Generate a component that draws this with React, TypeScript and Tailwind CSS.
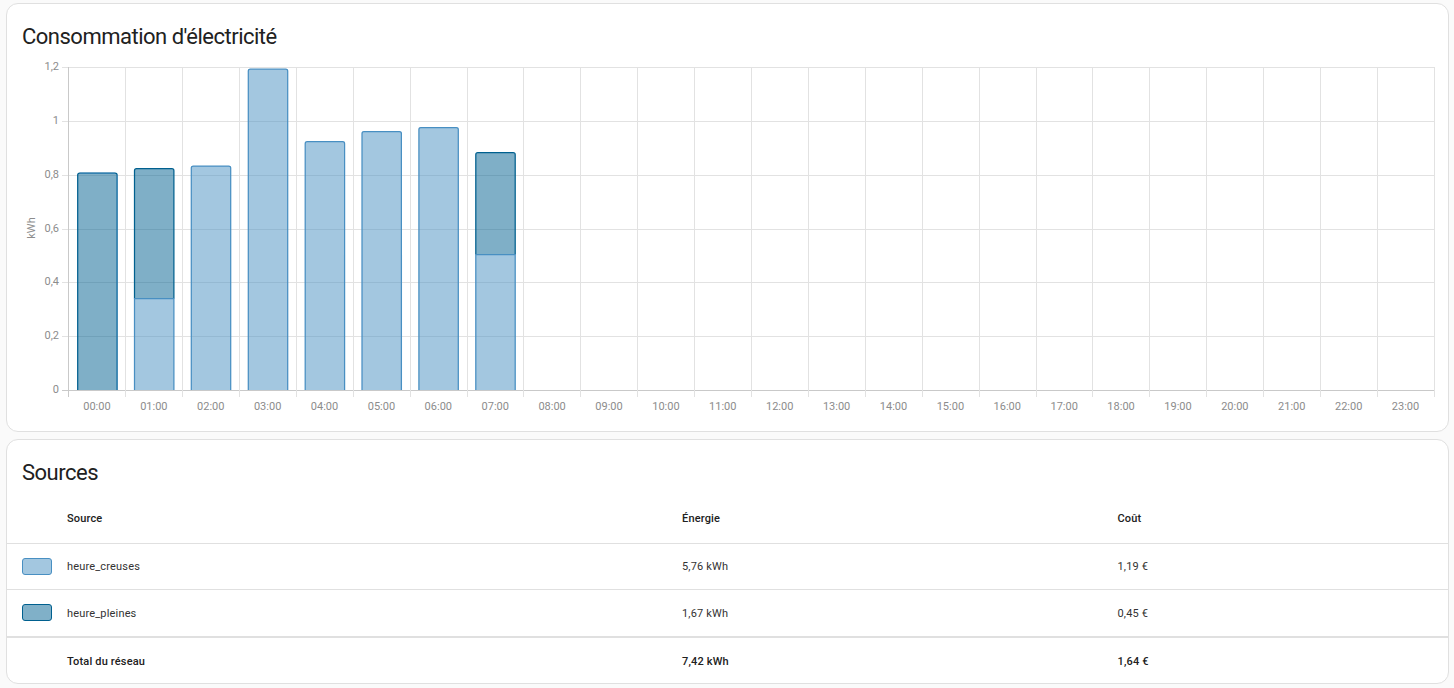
const hours = Array.from({ length: 24 }, (_, i) => String(i).padStart(2, "0") + ":00");
const yTicks = [
  { label: "1,2", y: 67.5 },
  { label: "1", y: 121.5 },
  { label: "0,8", y: 175.5 },
  { label: "0,6", y: 229.5 },
  { label: "0,4", y: 282.5 },
  { label: "0,2", y: 336.5 },
  { label: "0", y: 390.5 },
];
const step = (1434 - 68.5) / 24;
const gridX = [68, 125, 182, 239, 296, 353, 410, 467, 523, 580, 637, 694, 751, 808, 865, 922, 979, 1036, 1092, 1149, 1206, 1263, 1320, 1377, 1434];
const base = 390;

// top = top edge of the bar, split = edge between dark (above) and light (below)
const bars = [
  { x: 77.7, top: 173, split: 390, dark: true },
  { x: 134.5, top: 168.7, split: 298.5, dark: true },
  { x: 191.3, top: 166, split: 166, dark: false },
  { x: 248.3, top: 69.2, split: 69.2, dark: false },
  { x: 305.2, top: 141.7, split: 141.7, dark: false },
  { x: 362, top: 131.7, split: 131.7, dark: false },
  { x: 418.9, top: 127.5, split: 127.5, dark: false },
  { x: 475.8, top: 152.7, split: 254.5, dark: true },
];
const barW = 39.4;

function topPath(x: number, top: number, bottom: number) {
  return `M${x} ${bottom}V${top + 2}Q${x} ${top} ${x + 2} ${top}H${x + barW - 2}Q${x + barW} ${top} ${x + barW} ${top + 2}V${bottom}`;
}

function Chart() {
  return (
    <svg viewBox="7 56 1441 375" className="block w-[1441px] h-[375px]">
      {yTicks.map((t) => (
        <g key={t.label}>
          <line x1={62} x2={1434} y1={t.y} y2={t.y} stroke={t.label === "0" ? "#c9c9c9" : "#e2e2e2"} />
          <text x={59} y={t.y + 2} textAnchor="end" fontSize={11} fill="#8c8c8c" fontFamily="Roboto, sans-serif">
            {t.label}
          </text>
        </g>
      ))}
      {gridX.map((g, i) => (
        <line key={g} x1={g + 0.5} x2={g + 0.5} y1={67} y2={397} stroke={i === 0 ? "#c9c9c9" : "#e2e2e2"} />
      ))}
      {hours.map((h, i) => (
        <text key={h} x={68.5 + step * (i + 0.5)} y={410} textAnchor="middle" fontSize={11} fill="#8c8c8c" fontFamily="Roboto, sans-serif">
          {h}
        </text>
      ))}
      <text
        x={0}
        y={0}
        transform="translate(35 228) rotate(-90)"
        textAnchor="middle"
        fontSize={11}
        fill="#8c8c8c"
        fontFamily="Roboto, sans-serif"
      >
        kWh
      </text>
      {bars.map((b, i) => (
        <g key={b.x}>
          {b.dark && (
            <>
              <path d={`${topPath(b.x, b.top, b.split)}Z`} fill="#00608f" fillOpacity={0.5} />
              <path d={topPath(b.x, b.top, b.split)} fill="none" stroke="#00608f" strokeWidth={1.25} />
            </>
          )}
          {/* first bar: light series sits on top with almost no height, only its edge shows */}
          {i === 0 && (
            <path
              d={`M${b.x + 2} ${b.top}H${b.x + barW - 2}M${b.x + barW} ${b.top + 2}V${base}`}
              fill="none"
              stroke="#488fc2"
              strokeWidth={1.25}
              strokeOpacity={0.7}
            />
          )}
          {b.split < base && (
            <>
              <rect x={b.x} y={b.split} width={barW} height={base - b.split} fill="#488fc2" fillOpacity={0.5} />
              <path
                d={
                  b.dark
                    ? `M${b.x} ${base}V${b.split}H${b.x + barW}V${base}`
                    : topPath(b.x, b.split, base)
                }
                fill="none"
                stroke="#488fc2"
                strokeWidth={1.25}
              />
            </>
          )}
        </g>
      ))}
    </svg>
  );
}

function Swatch({ dark }: { dark: boolean }) {
  return (
    <div
      className={
        dark
          ? "w-[30px] h-[17px] rounded-[3px] border border-[#00608f] bg-[#80b0c8]"
          : "w-[30px] h-[17px] rounded-[3px] border border-[#488fc2] bg-[#a3c7e0]"
      }
    />
  );
}

export default function App() {
  return (
    <div
      className="h-[688px] overflow-hidden bg-[#fafafa] pt-[3px] pl-[6px] pr-[5px] flex flex-col gap-[7px] text-[#212121] opacity-[0.999]"
      style={{ fontFamily: "Roboto, sans-serif" }}
    >
      <div className="h-[429px] rounded-xl border border-[#e0e0e0] bg-white overflow-hidden">
        <h1 className="pt-[17px] pb-[3px] px-[15px] text-[22px] leading-8 tracking-[-0.5px] font-normal">Consommation d'électricité</h1>
        <Chart />
      </div>
      <div className="h-[245px] rounded-xl border border-[#e0e0e0] bg-white overflow-hidden">
        <h1 className="pt-[17px] pb-[5px] px-[15px] text-[22px] leading-8 tracking-[-0.5px] font-normal">Sources</h1>
        <table className="w-full table-fixed text-[11px] tracking-[0.015em]">
          <thead>
            <tr className="h-[49px] border-b border-[#e0e0e0] text-left">
              <th className="w-[60px]"></th>
              <th className="w-[615px] pt-[2px] font-medium">Source</th>
              <th className="w-[435.5px] pt-[2px] font-medium">Énergie</th>
              <th className="pt-[2px] font-medium">Coût</th>
            </tr>
          </thead>
          <tbody className="text-[#333333]">
            <tr className="h-[46px] border-b border-[#e0e0e0]">
              <td className="pl-[15px]"><Swatch dark={false} /></td>
              <td className="pt-[2px]">heure_creuses</td>
              <td className="pt-[2px]">5,76 kWh</td>
              <td className="pt-[2px]">1,19 €</td>
            </tr>
            <tr className="h-[48px] border-b-2 border-[#e0e0e0]">
              <td className="pl-[15px]"><Swatch dark /></td>
              <td className="pt-[3px]">heure_pleines</td>
              <td className="pt-[3px]">1,67 kWh</td>
              <td className="pt-[3px]">0,45 €</td>
            </tr>
            <tr className="h-[45px] font-medium text-[#212121]">
              <td></td>
              <td className="pt-[4px]">Total du réseau</td>
              <td className="pt-[4px]">7,42 kWh</td>
              <td className="pt-[4px]">1,64 €</td>
            </tr>
          </tbody>
        </table>
      </div>
    </div>
  );
}
